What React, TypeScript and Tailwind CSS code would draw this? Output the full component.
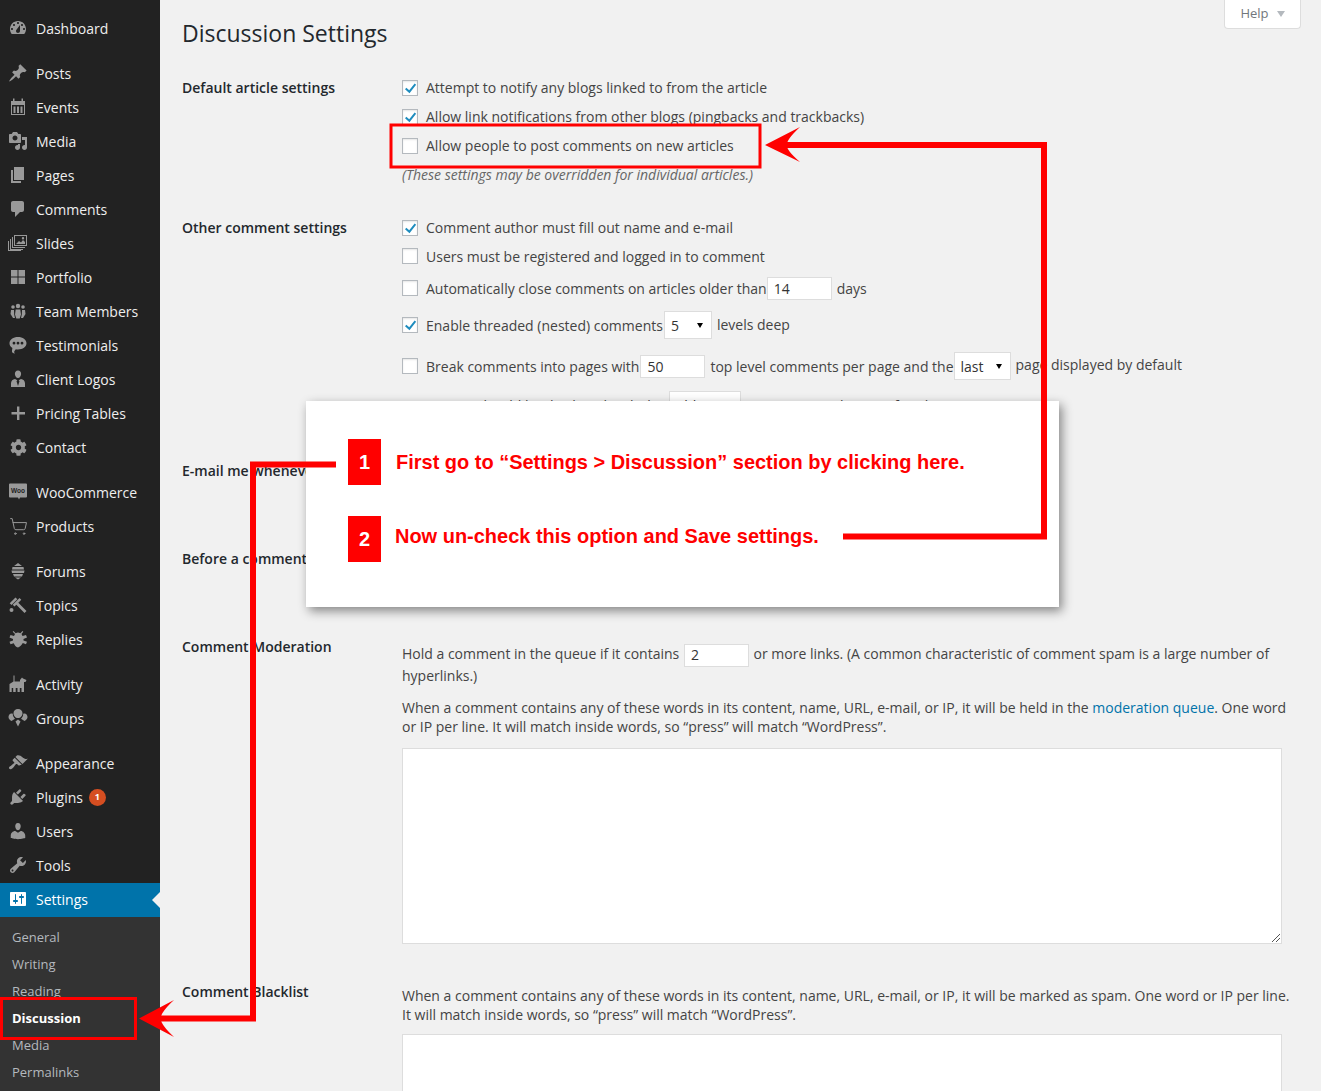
import { ReactNode } from 'react';
import { FaCog } from 'react-icons/fa';
import { ShoppingCart } from 'lucide-react';

const P = ({ d }: { d: string }) => <path d={d} fillRule="evenodd" />;

const Svg = ({ children }: { children: ReactNode }) => (
  <svg viewBox="0 0 20 20" className="w-5 h-5 fill-[#999]">{children}</svg>
);

const icons: Record<string, ReactNode> = {
  dashboard: <Svg><P d="M3.76 16h12.48c1.1-1.37 1.76-3.11 1.76-5 0-4.42-3.58-8-8-8s-8 3.58-8 8c0 1.89.66 3.63 1.76 5zM10 4c.55 0 1 .45 1 1s-.45 1-1 1-1-.45-1-1 .45-1 1-1zM6 6c.55 0 1 .45 1 1s-.45 1-1 1-1-.45-1-1 .45-1 1-1zm8 0c.55 0 1 .45 1 1s-.45 1-1 1-1-.45-1-1 .45-1 1-1zm-5.37 5.55L12 7v6c0 1.1-.9 2-2 2s-2-.9-2-2c0-.57.24-1.08.63-1.45zM4 10c.55 0 1 .45 1 1s-.45 1-1 1-1-.45-1-1 .45-1 1-1zm12 0c.55 0 1 .45 1 1s-.45 1-1 1-1-.45-1-1 .45-1 1-1z" /></Svg>,
  post: <Svg><P d="M10.44 3.02l1.82-1.82 6.36 6.35-1.83 1.82c-1.05-.68-2.48-.57-3.41.36l-.75.75c-.92.93-1.04 2.35-.35 3.41l-1.83 1.82-2.41-2.41-2.8 2.79c-.42.42-3.38 2.71-3.8 2.29s1.86-3.39 2.28-3.81l2.79-2.79L4.1 9.36l1.83-1.82c1.05.69 2.48.57 3.4-.36l.75-.75c.93-.92 1.05-2.35.36-3.41z" /></Svg>,
  events: <Svg><P d="M3 4h2V1.500h1.500V4h7V1.500H15V4h2v14H3V4zm1 4v9h12V8H4zm1.500 1.500h2V16h-2V9.500zm3.500 0h2V16H9V9.500zm3.500 0h2V16h-2V9.500z" /></Svg>,
  media: <Svg><P d="M13 11V4c0-.55-.45-1-1-1h-1.670L9 1H5L3.670 3H2c-.55 0-1 .45-1 1v7c0 .55.45 1 1 1h10c.55 0 1-.45 1-1zM7 4.500c1.380 0 2.500 1.120 2.500 2.500S8.380 9.500 7 9.500 4.500 8.380 4.500 7 5.620 4.500 7 4.500zM14 6h5v10.500c0 1.380-1.120 2.500-2.500 2.500S14 17.880 14 16.500s1.120-2.500 2.500-2.500c.17 0 .34.02.5.05V9h-3V6zm-4 8.050V13h2v3.500c0 1.380-1.120 2.500-2.500 2.500S7 17.880 7 16.500 8.120 14 9.500 14c.17 0 .34.02.5.05z" /></Svg>,
  page: <Svg><P d="M6 15V2h10v13H6zm-1 1h8v2H3V5h2v11z" /></Svg>,
  comments: <Svg><P d="M5 2h9c1.100 0 2 .9 2 2v7c0 1.100-.9 2-2 2h-2l-5 5v-5H5c-1.100 0-2-.9-2-2V4c0-1.100.9-2 2-2z" /></Svg>,
  slides: (
    <Svg>
      <P d="M6 2h13v11H6V2zm1 1v9h11V3H7zm1 8l3-3 2 1.500L15 7l2 2v2H8zm7-7a1.200 1.200 0 1 1 0 2.400A1.200 1.200 0 0 1 15 4z" />
      <P d="M4 4h1v10h12v1H4V4zM2 6h1v10h12v1H2V6zM0 8h1v9h12v1H0z" />
    </Svg>
  ),
  portfolio: <Svg><rect x="3" y="3" width="6.500" height="6.500" /><rect x="10.500" y="3" width="6.500" height="6.500" /><rect x="3" y="10.500" width="6.500" height="6.500" /><rect x="10.500" y="10.500" width="6.500" height="6.500" /></Svg>,
  team: (
    <Svg>
      <circle cx="10" cy="5" r="2.200" /><circle cx="5" cy="6" r="1.800" /><circle cx="15" cy="6" r="1.800" />
      <P d="M7.700 8.500h4.600l.7 5-1.300 4H8.300l-1.300-4zM3 9h3l.2 4.500.8 3.500H5l-2.500-4zM14 9h3l.5 4-2.500 4h-2l.8-3.500z" />
    </Svg>
  ),
  testimonials: <Svg><P d="M10 2c4.700 0 8.500 2.700 8.500 6.200s-3.800 6.200-8.500 6.200c-.8 0-1.500-.1-2.200-.2L6.500 16c-.5.700-.5 1.500.5 2.500-2 0-3.500-1-3-3l.4-2.600C2.500 11.800 1.500 10.100 1.500 8.200 1.500 4.700 5.300 2 10 2zM6 6.800a1.400 1.400 0 1 0 0 2.800 1.400 1.400 0 0 0 0-2.800zm4 0a1.400 1.400 0 1 0 0 2.800 1.400 1.400 0 0 0 0-2.800zm4 0a1.400 1.400 0 1 0 0 2.800 1.400 1.400 0 0 0 0-2.800z" /></Svg>,
  client: <Svg><P d="M10 1.500c2.200 0 3.300 1.800 3.100 3.800-.2 1.800-1.300 3.700-3.100 3.700S7.100 7.100 6.900 5.300C6.700 3.300 7.800 1.500 10 1.500zM7 10l2.300 1.200-.8 1L10 17l1.500-4.800-.8-1L13 10c2.200.2 4 2 4 4.300V18H3v-3.700C3 12 4.800 10.200 7 10z" /></Svg>,
  plus: <Svg><P d="M9 3.500h2.400V9H17v2.400h-5.600V17H9v-5.600H3.500V9H9z" /></Svg>,
  woo: (
    <svg viewBox="0 0 20 20" className="w-5 h-5">
      <path d="M2 1.500h16a1 1 0 0 1 1 1v12a1 1 0 0 1-1 1h-6l-1 2-1-2H2a1 1 0 0 1-1-1v-12a1 1 0 0 1 1-1z" fill="#999" />
      <text x="10" y="10.500" textAnchor="middle" fontSize="6.500" fontWeight="700" fill="#222" fontFamily="Liberation Sans, sans-serif">Woo</text>
    </svg>
  ),
  forums: <Svg><P d="M10 2l4 3H6zM4.500 6h11l.5 2.500H4zM3.500 9.500h13l-.5 2.500H4zM5 13h10l-1 2.500H6zM7 16.500h6L10 18.500z" /></Svg>,
  topics: <Svg><P d="M7.500 2.500l1.800 1.800L3.500 10 1.700 8.200zM11.500 3l1.800 1.800-3 3 8.200 8.200-2 2-8.200-8.200-1.800 1.800-1.800-1.800zM3.500 13a2 2 0 1 1 0 4 2 2 0 0 1 0-4z" /></Svg>,
  replies: <Svg><P d="M5.500 2l2.200 2.200a5 5 0 0 1 4.600 0L14.500 2l.8.8-1.800 2.100 1 2 3.500-1 1 2.500-3.500 1.500v1.500l3.500 1.300-1 2.500-3.200-1.100C13.600 16 12 18 10 18.500 8 18 6.400 16 5.700 14.200l-3.200 1.100-1-2.500L5 11.500V10L1.500 8.500l1-2.500L6 7l1-2.100-2.300-2.100z" /></Svg>,
  activity: <Svg><P d="M5.500 1.500h1v6H12V6l2-2.500 1 1L18.500 6l-1 2H16v10h-2.500v-4h-1.700v4H9.500v-4H7.700v4H5.200v-4H3.700v4H1.500V10l4-2.500z" /></Svg>,
  groups: <Svg><P d="M10 1c2.700 0 4.500 1.700 4.500 4.200S12.700 10 10 10 5.500 7.700 5.500 5.200 7.300 1 10 1zM3.500 5.500c.5 0 1 .1 1.300.3-.1 2 .9 3.800 2.200 4.900L3.500 13C1.800 12 .5 10.800.5 9s1.300-3.500 3-3.500zM16.500 5.500c1.700 0 3 1.700 3 3.500s-1.300 3-3 4L13 10.700c1.300-1.100 2.300-2.900 2.200-4.900.3-.2.800-.3 1.300-.3zM10 11.500l2.500 2-2.500 5-2.500-5z" /></Svg>,
  appearance: <Svg><P d="M14.480 11.060L7.410 3.990l1.500-1.500c.5-.56 2.300-.47 3.510.32 1.210.8 1.430 1.280 2.910 2.100 1.180.64 2.450 1.260 4.450.85zm-.71.71L6.700 4.700 4.930 6.470c-.39.39-.39 1.020 0 1.410l1.060 1.060c.39.39.39 1.030 0 1.420-.6.6-1.430 1.110-2.210 1.690-.35.26-.7.53-1.010.84C1.430 13.230.4 14.810 1.400 15.810c.99 1 2.580-.03 3.920-1.370.31-.31.58-.66.84-1.010.58-.78 1.090-1.610 1.690-2.210.39-.39 1.020-.39 1.410 0l1.060 1.060c.39.39 1.020.39 1.410 0z" /></Svg>,
  plugins: <Svg><P d="M13.110 4.360L9.870 7.600 8 5.730l3.240-3.240c.35-.34 1.050-.2 1.560.32.52.51.66 1.210.31 1.550zm-8 1.770l.91-1.120 9.010 9.010-1.190.84c-.71.71-2.630 1.160-3.820 1.160H6.140L4.900 17.260c-.59.59-1.540.59-2.120 0-.59-.58-.59-1.530 0-2.120l1.240-1.240v-3.880c0-1.130.4-3.190 1.090-3.890zm7.260 3.970l3.240-3.240c.34-.35 1.040-.21 1.550.31.52.51.66 1.210.31 1.550l-3.240 3.250z" /></Svg>,
  users: <Svg><P d="M10 9.250c-2.270 0-2.730-3.440-2.730-3.440C7 4.020 7.820 2 9.970 2c2.160 0 2.980 2.020 2.710 3.810 0 0-.41 3.440-2.680 3.440zm0 2.570L12.720 10c2.390 0 4.520 2.330 4.520 4.530v2.490s-3.650 1.130-7.240 1.130c-3.650 0-7.240-1.130-7.240-1.130v-2.490c0-2.250 1.940-4.480 4.470-4.480z" /></Svg>,
  tools: <Svg><P d="M16.680 9.770c-1.340 1.340-3.300 1.670-4.950.99l-5.410 6.520c-.99.99-2.590.99-3.580 0s-.99-2.590 0-3.570l6.520-5.420c-.68-1.650-.35-3.610.99-4.950 1.280-1.280 3.120-1.620 4.720-1.060l-2.890 2.890 2.820 2.820 2.860-2.870c.53 1.580.18 3.390-1.080 4.650zM3.810 16.210c.4.39 1.040.39 1.430 0 .4-.4.4-1.040 0-1.430-.39-.4-1.030-.4-1.430 0-.39.39-.39 1.030 0 1.430z" /></Svg>,
  settings: (
    <svg viewBox="0 0 20 20" className="w-5 h-5 fill-white">
      <P d="M18 16V4c0-.55-.45-1-1-1H3c-.55 0-1 .45-1 1v12c0 .55.45 1 1 1h14c.55 0 1-.45 1-1zM8 11h1c.55 0 1 .45 1 1s-.45 1-1 1H8v1.500c0 .28-.22.5-.5.5s-.5-.22-.5-.5V13H6c-.55 0-1-.45-1-1s.45-1 1-1h1V5.500c0-.28.22-.5.5-.5s.5.22.5.5V11zm5-2h-1c-.55 0-1-.45-1-1s.45-1 1-1h1V5.500c0-.28.22-.5.5-.5s.5.22.5.5V7h1c.55 0 1 .45 1 1s-.45 1-1 1h-1v5.500c0 .28-.22.5-.5.5s-.5-.22-.5-.5V9z" />
    </svg>
  ),
  contact: <FaCog className="w-[17px] h-[17px] text-[#999] ml-[1px]" />,
  products: <ShoppingCart className="w-[19px] h-[19px] text-[#999]" strokeWidth={1.25} />,
};

const menuGroups = [
  [['Dashboard', 'dashboard']],
  [
    ['Posts', 'post'], ['Events', 'events'], ['Media', 'media'], ['Pages', 'page'], ['Comments', 'comments'],
    ['Slides', 'slides'], ['Portfolio', 'portfolio'], ['Team Members', 'team'], ['Testimonials', 'testimonials'],
    ['Client Logos', 'client'], ['Pricing Tables', 'plus'], ['Contact', 'contact'],
  ],
  [['WooCommerce', 'woo'], ['Products', 'products']],
  [['Forums', 'forums'], ['Topics', 'topics'], ['Replies', 'replies']],
  [['Activity', 'activity'], ['Groups', 'groups']],
  [['Appearance', 'appearance'], ['Plugins', 'plugins'], ['Users', 'users'], ['Tools', 'tools']],
];

const subMenu = ['General', 'Writing', 'Reading', 'Discussion', 'Media', 'Permalinks'];

const Sidebar = () => (
  <aside className="w-[160px] shrink-0 bg-[#222] pt-[11px] text-[14px] text-[#eee]">
    {menuGroups.map((group, i) => (
      <div key={i} className={i < menuGroups.length - 1 ? 'mb-[11px]' : ''}>
        {group.map(([label, icon]) => (
          <div key={label} className="flex h-[34px] items-center">
            <span className="flex w-9 shrink-0 justify-center">{icons[icon]}</span>
            <span>{label}</span>
            {label === 'Plugins' && (
              <span className="ml-[6px] flex h-[17px] w-[17px] items-center justify-center rounded-full bg-[#d54e21] text-[9px] font-bold text-white">
                1
              </span>
            )}
          </div>
        ))}
      </div>
    ))}
    <div className="relative mt-px flex h-[34px] items-center bg-[#0073aa] pb-[2px] text-white">
      <span className="flex w-9 shrink-0 justify-center">{icons.settings}</span>
      <span>Settings</span>
      <span className="absolute right-0 top-[9px] h-0 w-0 border-y-[8px] border-r-[8px] border-y-transparent border-r-[#f1f1f1]" />
    </div>
    <div className="h-[174px] bg-[#333] pt-[7px] text-[13px] text-[#b4b9be]">
      {subMenu.map(item => (
        <div key={item} className={`flex h-[27px] items-center pl-3 ${item === 'Discussion' ? 'font-bold text-white' : ''}`}>
          {item}
        </div>
      ))}
    </div>
  </aside>
);

const Checkbox = ({ checked }: { checked?: boolean }) => (
  <span className="mr-2 inline-flex h-4 w-4 shrink-0 items-center justify-center border border-[#b4b9be] bg-white shadow-[inset_0_1px_2px_rgba(0,0,0,0.1)]">
    {checked && (
      <svg viewBox="0 0 16 16" className="h-[16px] w-[16px] fill-[#1e8cbe]">
        <path d="M13.300 2.800L15 4.200 7.400 14 2.300 9.300 3.800 7.700 7.100 10.500z" />
      </svg>
    )}
  </span>
);

const NumInput = ({ value, className = '' }: { value: string; className?: string }) => (
  <span className={`-my-1 inline-flex h-[23px] w-[65px] shrink-0 items-center border border-[#ddd] bg-white pl-[6px] align-middle text-[14px] text-[#333] ${className}`}>
    {value}
  </span>
);

const Select = ({ value, className }: { value: string; className: string }) => (
  <span className={`inline-flex h-[28px] shrink-0 items-center justify-between border border-[#ddd] bg-white pl-[6px] pr-[8px] align-middle text-[14px] text-[#333] ${className}`}>
    {value}
    <span className="h-0 w-0 border-x-[3px] border-t-[5px] border-x-transparent border-t-black" />
  </span>
);

const Row = ({ h, children }: { h: string; children: ReactNode }) => (
  <div className={`flex items-center whitespace-nowrap ${h}`}>{children}</div>
);

const Section = ({ label, className, children }: { label: string; className: string; children: ReactNode }) => (
  <section className={`flex ${className}`}>
    <h3 className="h-[29px] w-[220px] shrink-0 text-[14px] font-semibold leading-[29px] text-[#23282d]">{label}</h3>
    <div className="min-w-0 flex-1">{children}</div>
  </section>
);

const Main = () => (
  <main className="relative min-w-0 flex-1 bg-[#f1f1f1] pl-[22px] pr-[28px] text-[14px] text-[#444]">
    <div className="absolute right-[20px] top-0 flex h-[29px] w-[77px] items-center justify-center gap-2 rounded-b border border-t-0 border-[#ddd] bg-white text-[13px] text-[#72777c]">
      Help
      <span className="h-0 w-0 border-x-[4px] border-t-[6px] border-x-transparent border-t-[#b4b9be]" />
    </div>
    <h1 className="h-[73px] pt-[16px] text-[23px] leading-[34px] text-[#23282d]">Discussion Settings</h1>

    <Section label="Default article settings" className="h-[140px]">
      <Row h="h-[29px]"><Checkbox checked />Attempt to notify any blogs linked to from the article</Row>
      <Row h="h-[29px]"><Checkbox checked />Allow link notifications from other blogs (pingbacks and trackbacks)</Row>
      <Row h="h-[29px]"><Checkbox />Allow people to post comments on new articles</Row>
      <Row h="h-[28px]"><em className="text-[#666]">(These settings may be overridden for individual articles.)</em></Row>
    </Section>

    <Section label="Other comment settings" className="h-[243px]">
      <Row h="h-[29px]"><Checkbox checked />Comment author must fill out name and e-mail</Row>
      <Row h="h-[28px]"><Checkbox />Users must be registered and logged in to comment</Row>
      <Row h="h-[36px]"><Checkbox />Automatically close comments on articles older than<NumInput value="14" className="mr-[5px]" />days</Row>
      <Row h="h-[38px]"><Checkbox checked />Enable threaded (nested) comments<Select value="5" className="ml-[1px] mr-[5px] w-[48px]" /><span className="-mt-[2px]">levels deep</span></Row>
      <Row h="h-[44px]"><Checkbox />Break comments into pages with<NumInput value="50" className="ml-[1px] mr-[5px]" />top level comments per page and the<Select value="last" className="mr-[5px] w-[57px]" /><span className="-mt-[4px]">page displayed by default</span></Row>
      <Row h="h-[34px]">Comments should be displayed with the<Select value="older" className="mx-[5px] w-[72px]" />comments at the top of each page</Row>
    </Section>

    <Section label="E-mail me whenever" className="h-[88px]">
      <Row h="h-[29px]"><Checkbox checked />Anyone posts a comment</Row>
      <Row h="h-[29px]"><Checkbox checked />A comment is held for moderation</Row>
    </Section>

    <Section label="Before a comment appears" className="h-[88px]">
      <Row h="h-[29px]"><Checkbox />Comment must be manually approved</Row>
      <Row h="h-[29px]"><Checkbox checked />Comment author must have a previously approved comment</Row>
    </Section>

    <Section label="Comment Moderation" className="h-[345px]">
      <p className="pt-[11px] leading-[22px]">
        Hold a comment in the queue if it contains <NumInput value="2" className="mx-px" /> or more links. (A common characteristic of comment spam is a large number of hyperlinks.)
      </p>
      <p className="mt-[11px] leading-[19px]">
        When a comment contains any of these words in its content, name, URL, e-mail, or IP, it will be held in the <span className="text-[#0073aa]">moderation queue</span>. One word or IP per line. It will match inside words, so “press” will match “WordPress”.
      </p>
      <div className="relative mt-[12px] h-[196px] w-[880px] border border-[#ddd] bg-white">
        <svg viewBox="0 0 8 8" className="absolute bottom-[1px] right-[1px] h-2 w-2 stroke-[#555]">
          <path d="M8 0L0 8M8 4L4 8" />
        </svg>
      </div>
    </Section>

    <Section label="Comment Blacklist" className="h-[114px]">
      <p className="pt-[9px] leading-[19px]">
        When a comment contains any of these words in its content, name, URL, e-mail, or IP, it will be marked as spam. One word or IP per line. It will match inside words, so “press” will match “WordPress”.
      </p>
      <div className="mt-[10px] h-[197px] w-[880px] border border-[#ddd] bg-white" />
    </Section>
  </main>
);

const Callout = () => (
  <div className="absolute left-[306px] top-[401px] z-10 h-[206px] w-[753px] bg-white pl-[42px] pt-[38px] font-['Liberation_Sans',sans-serif] font-bold text-[#f00] shadow-[3px_4px_10px_rgba(0,0,0,0.45)]">
    <div className="flex h-[46px] items-center">
      <span className="flex h-[46px] w-[33px] items-center justify-center bg-[#f00] text-[20px] text-white">1</span>
      <span className="ml-[15px] origin-left scale-x-[0.951] whitespace-nowrap text-[21px]">First go to “Settings &gt; Discussion” section by clicking here.</span>
    </div>
    <div className="mt-[31px] flex h-[46px] items-center">
      <span className="flex h-[46px] w-[33px] items-center justify-center bg-[#f00] text-[20px] text-white">2</span>
      <span className="-mt-[6px] ml-[14px] origin-left scale-x-[0.951] whitespace-nowrap text-[21px]">Now un-check this option and Save settings.</span>
    </div>
  </div>
);

const Arrows = () => (
  <svg viewBox="0 0 1321 1091" className="pointer-events-none absolute left-0 top-0 z-20 h-[1091px] w-[1321px]" fill="none" stroke="#f00">
    <rect x="391" y="125" width="369" height="42" strokeWidth="3" />
    <rect x="1.500" y="998.500" width="134" height="40" strokeWidth="3" />
    <path d="M843 536.500H1044V145H785" strokeWidth="6" />
    <path d="M336 464.500H253V1018.500H160" strokeWidth="6" />
    <path d="M765 145L800 127Q786 140 787 145Q786 150 800 162z" fill="#f00" stroke="none" />
    <path d="M139 1018.500L174 1000Q160 1013 161 1018.500Q160 1024 174 1037z" fill="#f00" stroke="none" />
  </svg>
);

export default function App() {
  return (
    <div className="relative flex h-[1091px] w-[1321px] overflow-hidden font-['Open_Sans',sans-serif]">
      <Sidebar />
      <Main />
      <Callout />
      <Arrows />
    </div>
  );
}
